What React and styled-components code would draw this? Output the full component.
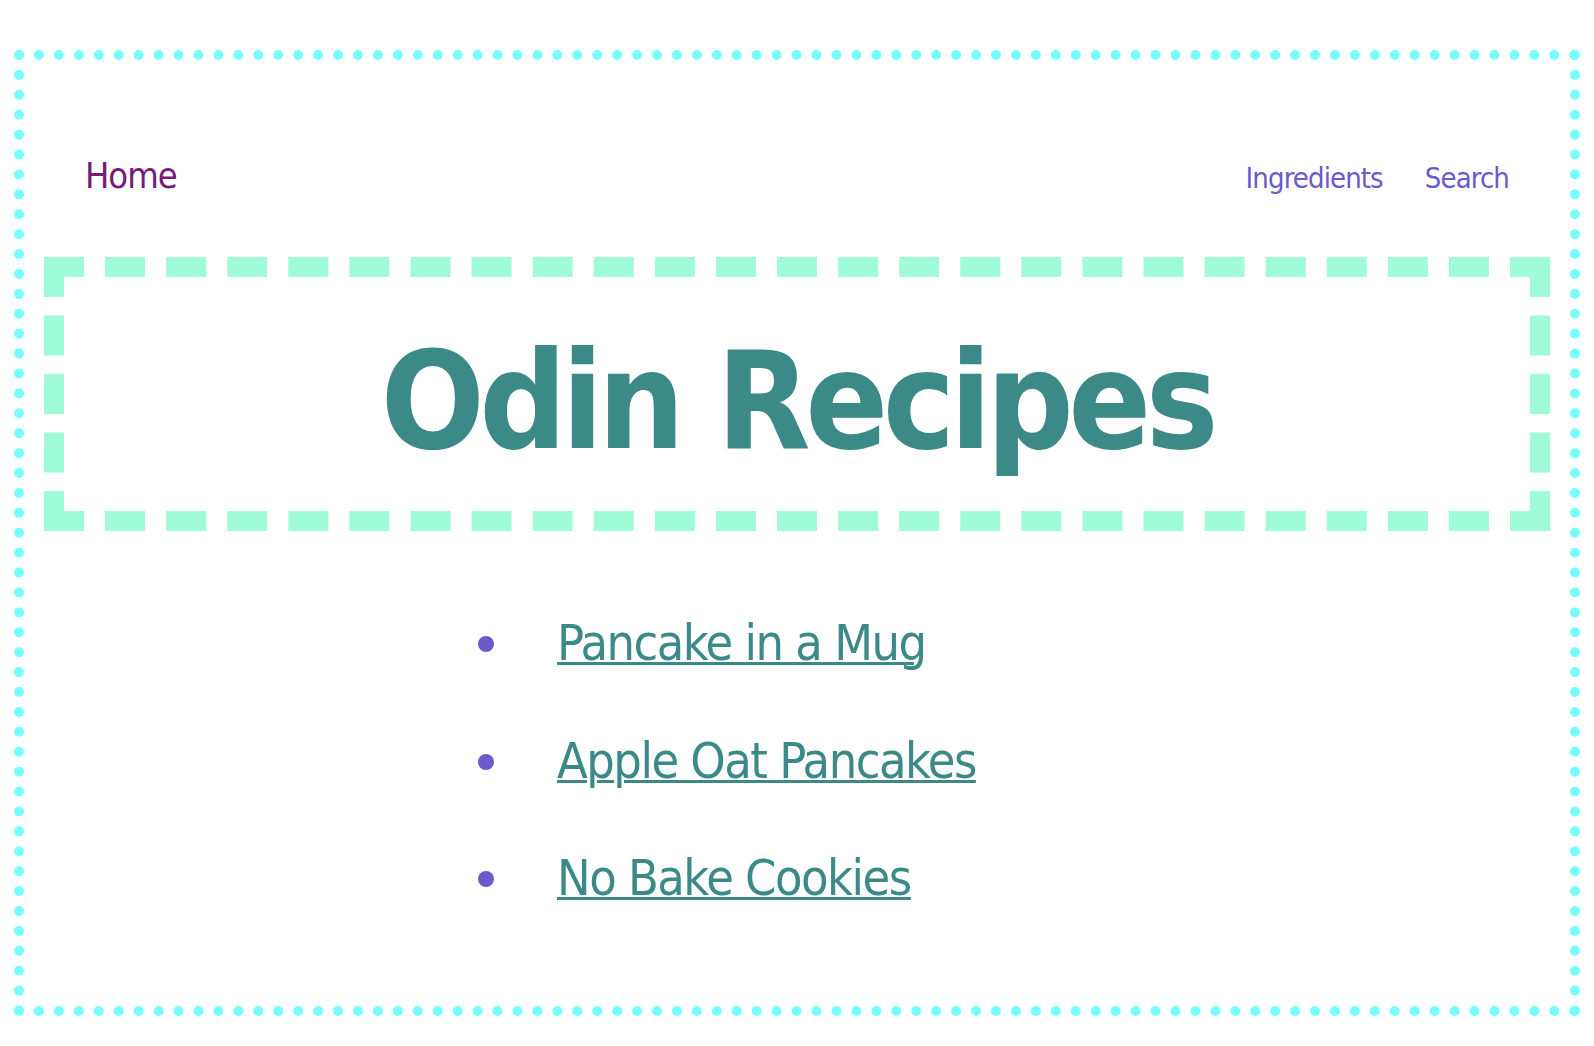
import React from "react";
import styled, { createGlobalStyle } from "styled-components";

const GlobalStyle = createGlobalStyle`
    body {
        margin: 0;
        background: #fff;
        font-family: "DejaVu Sans Condensed", "DejaVu Sans", Verdana, sans-serif;
    }
`;

const Page = styled.div`
    padding: 50px 14px 30px;
`;

const Frame = styled.div`
    box-sizing: border-box;
    height: 966px;
    border: 10px dotted #77ffff;
    padding: 0 20px;
`;

const Nav = styled.nav`
    display: flex;
    justify-content: space-between;
    align-items: baseline;
    padding: 98px 41px 0;
`;

const NavGroup = styled.div`
    display: flex;
    align-items: baseline;
    gap: 42px;
`;

const NavLink = styled.a`
    line-height: 1;
    text-decoration: none;
    font-size: ${(p) => (p.$home ? "36px" : "29px")};
    letter-spacing: ${(p) => (p.$home ? "-1px" : "-0.9px")};
    color: ${(p) => (p.$home ? "#771a7a" : "#6a5acd")};
`;

const Banner = styled.header`
    box-sizing: border-box;
    height: 274px;
    margin-top: 63px;
    border: 20px dashed #a0fcd8;
    display: flex;
    align-items: center;
    justify-content: center;
    padding-top: 13px;
`;

const Title = styled.h1`
    margin: 0;
    line-height: 1;
    font-size: 136px;
    font-weight: bold;
    letter-spacing: -5.5px;
    color: #3c8a88;
`;

const RecipeList = styled.ul`
    list-style: none;
    margin: 54px 0 0;
    padding: 0 0 0 434px;
`;

const Recipe = styled.li`
    display: flex;
    align-items: center;
    gap: 63px;
    line-height: 117.7px;
    font-size: 50px;
`;

const Bullet = styled.span`
    width: 16px;
    height: 16px;
    border-radius: 50%;
    background: #6a5acd;
    flex: none;
`;

const RecipeLink = styled.a`
    color: #3c8a88;
    letter-spacing: -1.5px;
    text-decoration: underline;
    text-decoration-thickness: 3px;
`;

const recipes = ["Pancake in a Mug", "Apple Oat Pancakes", "No Bake Cookies"];

export default function App() {
    return (
        <>
            <GlobalStyle />
            <Page>
                <Frame>
                    <Nav>
                        <NavLink $home href="#">Home</NavLink>
                        <NavGroup>
                            <NavLink href="#">Ingredients</NavLink>
                            <NavLink href="#">Search</NavLink>
                        </NavGroup>
                    </Nav>
                    <Banner>
                        <Title>Odin Recipes</Title>
                    </Banner>
                    <RecipeList>
                        {recipes.map((name) => (
                            <Recipe key={name}>
                                <Bullet />
                                <RecipeLink href="#">{name}</RecipeLink>
                            </Recipe>
                        ))}
                    </RecipeList>
                </Frame>
            </Page>
        </>
    );
}
